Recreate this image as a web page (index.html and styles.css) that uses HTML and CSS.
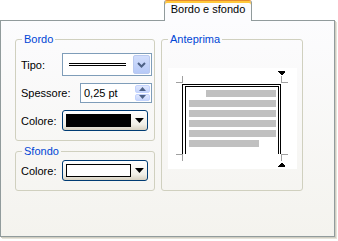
FILE: index.html
```html
<html>
<head>
  <title>Bordo e sfondo</title>
  <link rel="stylesheet" href="styles.css">
</head>
<body>
  <div class="tabbar">
    <div class="tab">Bordo e sfondo</div>
  </div>

  <div class="panel">
    <div class="col">
      <fieldset class="group bordo">
        <legend>Bordo</legend>
        <div class="row row-tipo">
          <span class="lbl">Tipo:</span>
          <div class="combo">
            <div class="double-line"></div>
            <div class="drop-btn">
              <svg width="9" height="6" viewBox="0 0 9 6"><path d="M1 1 L4.5 4.5 L8 1" fill="none" stroke="#4d6185" stroke-width="2"/></svg>
            </div>
          </div>
        </div>
        <div class="row row-spessore">
          <span class="lbl">Spessore:</span>
          <div class="spin">
            <span class="spin-val">0,25 pt</span>
            <div class="spin-btns">
              <div class="spin-btn"><svg width="7" height="4" viewBox="0 0 7 4"><path d="M0 4 L3.5 0 L7 4 Z" fill="#4d6185"/></svg></div>
              <div class="spin-btn"><svg width="7" height="4" viewBox="0 0 7 4"><path d="M0 0 L3.5 4 L7 0 Z" fill="#4d6185"/></svg></div>
            </div>
          </div>
        </div>
        <div class="row row-colore">
          <span class="lbl">Colore:</span>
          <div class="color-btn">
            <div class="swatch black"></div>
            <svg class="arrow" width="9" height="5" viewBox="0 0 9 5"><path d="M0 0 H9 L4.5 5 Z" fill="#000"/></svg>
          </div>
        </div>
      </fieldset>

      <fieldset class="group sfondo">
        <legend>Sfondo</legend>
        <div class="row row-colore">
          <span class="lbl">Colore:</span>
          <div class="color-btn">
            <div class="swatch white"></div>
            <svg class="arrow" width="9" height="5" viewBox="0 0 9 5"><path d="M0 0 H9 L4.5 5 Z" fill="#000"/></svg>
          </div>
        </div>
      </fieldset>
    </div>

    <fieldset class="group anteprima">
      <legend>Anteprima</legend>
      <div class="preview">
        <svg width="129" height="101" viewBox="0 0 129 101" shape-rendering="crispEdges">
          <!-- crop marks -->
          <g fill="#a0a0a0">
            <rect x="8" y="14" width="7" height="1"/>
            <rect x="14" y="8" width="1" height="7"/>
            <rect x="113" y="14" width="7" height="1"/>
            <rect x="113" y="8" width="1" height="7"/>
            <rect x="8" y="86" width="7" height="1"/>
            <rect x="14" y="86" width="1" height="7"/>
            <rect x="113" y="86" width="7" height="1"/>
            <rect x="113" y="86" width="1" height="7"/>
          </g>
          <!-- double border: left, top, right -->
          <g fill="#000">
            <rect x="14" y="16" width="99" height="1"/>
            <rect x="17" y="18" width="94" height="1"/>
            <rect x="14" y="16" width="1" height="70"/>
            <rect x="17" y="18" width="1" height="68"/>
            <rect x="112" y="16" width="1" height="70"/>
            <rect x="110" y="18" width="1" height="68"/>
          </g>
          <!-- text bars -->
          <g fill="#c0c0c0">
            <rect x="38" y="22" width="70" height="7"/>
            <rect x="21" y="32" width="87" height="7"/>
            <rect x="21" y="42" width="87" height="7"/>
            <rect x="21" y="52" width="87" height="7"/>
            <rect x="21" y="62" width="87" height="7"/>
            <rect x="21" y="72" width="70" height="7"/>
          </g>
          <!-- border arrows -->
          <g fill="#000">
            <rect x="110" y="3" width="7" height="1"/>
            <path d="M110 4 H117 L113.5 7.5 Z"/>
            <rect x="110" y="98" width="7" height="1"/>
            <path d="M110 98 H117 L113.5 94.5 Z"/>
          </g>
        </svg>
      </div>
    </fieldset>
  </div>
</body>
</html>
```

FILE: styles.css
```css
html, body {
  margin: 0;
  padding: 0;
}
body {
  font: 11px "Liberation Sans", Arial, sans-serif;
  color: #000;
  background: #fff;
}
.tabbar {
  display: flex;
  height: 20px;
  padding-left: 164px;
}
.tab {
  position: relative;
  z-index: 1;
  box-sizing: border-box;
  width: 88px;
  height: 21px;
  border: 1px solid #919b9c;
  border-top: 1px solid #e68b2c;
  border-bottom: none;
  border-radius: 3px 3px 0 0;
  box-shadow: inset 0 2px 0 #ffc83c;
  background: #fcfcfe;
  padding-top: 2px;
  line-height: 13px;
  text-align: center;
}
.panel {
  box-sizing: border-box;
  width: 335px;
  height: 217px;
  border: 1px solid #919b9c;
  background: linear-gradient(#fcfcfe, #f4f3ee);
  box-shadow: 1px 1px 0 #d0cec2, 2px 2px 0 #e6e4da;
  display: flex;
  gap: 6px;
  padding: 12px 0 0 14px;
}
.col {
  display: flex;
  flex-direction: column;
  gap: 4px;
  width: 140px;
}
.group {
  box-sizing: border-box;
  margin: 0;
  padding: 0;
  min-width: 0;
  border: 1px solid #d0d0bf;
  border-radius: 3px;
}
.group legend {
  margin-left: 6px;
  padding: 0 2px;
  color: #0046d5;
  line-height: 13px;
}
.bordo {
  height: 108px;
}
.sfondo {
  height: 46px;
}
.anteprima {
  width: 142px;
  height: 158px;
}
.row {
  display: flex;
  align-items: center;
  padding-left: 5px;
}
.lbl {
  flex: 1;
}
.row-tipo {
  height: 23px;
  margin-top: 7px;
}
.row-spessore {
  height: 20px;
  margin-top: 7px;
}
.bordo .row-colore {
  height: 21px;
  margin-top: 7px;
}
.sfondo .row-colore {
  height: 21px;
  margin-top: 2px;
}
.combo {
  box-sizing: border-box;
  width: 90px;
  height: 23px;
  margin-right: 2px;
  border: 1px solid #7f9db9;
  background: #fff;
  display: flex;
  align-items: center;
  padding: 1px;
}
.double-line {
  width: 57px;
  height: 1px;
  margin-left: 5px;
  border-top: 1px solid #000;
  border-bottom: 1px solid #000;
}
.drop-btn {
  box-sizing: border-box;
  margin-left: auto;
  width: 17px;
  height: 19px;
  border: 1px solid #b9c9ef;
  border-radius: 2px;
  background: linear-gradient(#d2defc, #b6c9f7);
  display: flex;
  align-items: center;
  justify-content: center;
}
.spin {
  box-sizing: border-box;
  width: 72px;
  height: 20px;
  margin-right: 2px;
  border: 1px solid #7f9db9;
  background: #fff;
  display: flex;
  align-items: center;
  padding: 1px;
}
.spin-val {
  flex: 1;
  padding-left: 2px;
}
.spin-btns {
  display: flex;
  flex-direction: column;
  gap: 1px;
  height: 100%;
}
.spin-btn {
  box-sizing: border-box;
  flex: 1;
  width: 15px;
  border: 1px solid #c3d3fd;
  border-radius: 2px;
  background: linear-gradient(#e0e8fe, #c6d5fc);
  display: flex;
  align-items: center;
  justify-content: center;
}
.color-btn {
  box-sizing: border-box;
  width: 86px;
  height: 21px;
  margin-right: 6px;
  border: 1px solid #003c74;
  border-radius: 3px;
  background: linear-gradient(#ffffff, #f0efe8 70%, #d8d2c2);
  display: flex;
  align-items: center;
  padding: 0 3px;
}
.swatch {
  box-sizing: border-box;
  width: 66px;
  height: 13px;
  border: 1px solid #000;
}
.swatch.black {
  background: #000;
}
.swatch.white {
  background: #fff;
}
.arrow {
  margin-left: 4px;
}
.preview {
  width: 129px;
  height: 101px;
  margin: 22px 0 0 6px;
  background: #fff;
}
.preview svg {
  display: block;
}
```
